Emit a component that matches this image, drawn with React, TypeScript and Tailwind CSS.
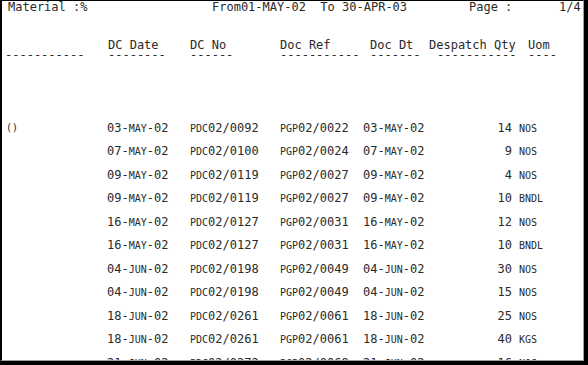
const rows = [
  { date: "03-MAY-02", dc: "PDC02/0092", ref: "PGP02/0022", dt: "03-MAY-02", qty: "14", uom: "NOS", mark: true },
  { date: "07-MAY-02", dc: "PDC02/0100", ref: "PGP02/0024", dt: "07-MAY-02", qty: "9", uom: "NOS" },
  { date: "09-MAY-02", dc: "PDC02/0119", ref: "PGP02/0027", dt: "09-MAY-02", qty: "4", uom: "NOS" },
  { date: "09-MAY-02", dc: "PDC02/0119", ref: "PGP02/0027", dt: "09-MAY-02", qty: "10", uom: "BNDL" },
  { date: "16-MAY-02", dc: "PDC02/0127", ref: "PGP02/0031", dt: "16-MAY-02", qty: "12", uom: "NOS" },
  { date: "16-MAY-02", dc: "PDC02/0127", ref: "PGP02/0031", dt: "16-MAY-02", qty: "10", uom: "BNDL" },
  { date: "04-JUN-02", dc: "PDC02/0198", ref: "PGP02/0049", dt: "04-JUN-02", qty: "30", uom: "NOS" },
  { date: "04-JUN-02", dc: "PDC02/0198", ref: "PGP02/0049", dt: "04-JUN-02", qty: "15", uom: "NOS" },
  { date: "18-JUN-02", dc: "PDC02/0261", ref: "PGP02/0061", dt: "18-JUN-02", qty: "25", uom: "NOS" },
  { date: "18-JUN-02", dc: "PDC02/0261", ref: "PGP02/0061", dt: "18-JUN-02", qty: "40", uom: "KGS" },
  { date: "21-JUN-02", dc: "PDC02/0272", ref: "PGP02/0068", dt: "21-JUN-02", qty: "16", uom: "NOS" },
];

// letters print in the report's small caps, digits keep full height
function Caps({ text }: { text: string }) {
  const parts = text.match(/[A-Z]+|[^A-Z]+/g) ?? [];
  return (
    <>
      {parts.map((p, i) =>
        /[A-Z]/.test(p) ? (
          <span key={i} className="text-[10px]">{p}</span>
        ) : (
          <span key={i}>{p}</span>
        )
      )}
    </>
  );
}

export default function App() {
  return (
    <div className="w-[588px] h-[365px] bg-black pr-[4px] pb-[4px] font-['DejaVu_Sans_Mono',monospace] text-[12px] text-[#2a2a2a]">
      {/* report page */}
      <div className="w-full h-full bg-white border-l-2 border-t border-black border-r border-r-[#a0a0a0] border-b border-b-[#a0a0a0] overflow-hidden">
        {/* title line */}
        <div className="flex h-[12px] items-center leading-none whitespace-pre">
          <span className="pl-[6px] w-[210px]">Material :%</span>
          <span className="w-[257px]">From01-MAY-02  To 30-APR-03</span>
          <span className="w-[90px]">Page :</span>
          <span>1/4</span>
        </div>

        {/* column heads */}
        <div className="flex mt-[26px] h-[11px] items-center leading-none">
          <span className="w-[106px]" />
          <span className="w-[82px]">DC Date</span>
          <span className="w-[90px]">DC No</span>
          <span className="w-[90px]">Doc Ref</span>
          <span className="w-[59px]">Doc Dt</span>
          <span className="w-[99px]">Despatch Qty</span>
          <span>Uom</span>
        </div>
        <div className="flex h-[10px] items-center leading-none">
          <span className="w-[106px] pl-[3px]">-----------</span>
          <span className="w-[82px]">--------</span>
          <span className="w-[90px]">------</span>
          <span className="w-[90px]">-----------</span>
          <span className="w-[67px]">-------</span>
          <span className="w-[91px]">-----------</span>
          <span>----</span>
        </div>

        {/* rows */}
        <div className="mt-[56px]">
          {rows.map((r, i) => (
            <div key={i} className="flex h-[23.5px] items-center leading-none">
              <span className="w-[105px] pl-[4px] text-[10px]">{r.mark ? "()" : ""}</span>
              <span className="w-[83px]"><Caps text={r.date} /></span>
              <span className="w-[90px]"><Caps text={r.dc} /></span>
              <span className="w-[83px]"><Caps text={r.ref} /></span>
              <span className="w-[80px]"><Caps text={r.dt} /></span>
              <span className="w-[69px] text-right">{r.qty}</span>
              <span className="pl-[7px]"><Caps text={r.uom} /></span>
            </div>
          ))}
        </div>
      </div>
    </div>
  );
}
